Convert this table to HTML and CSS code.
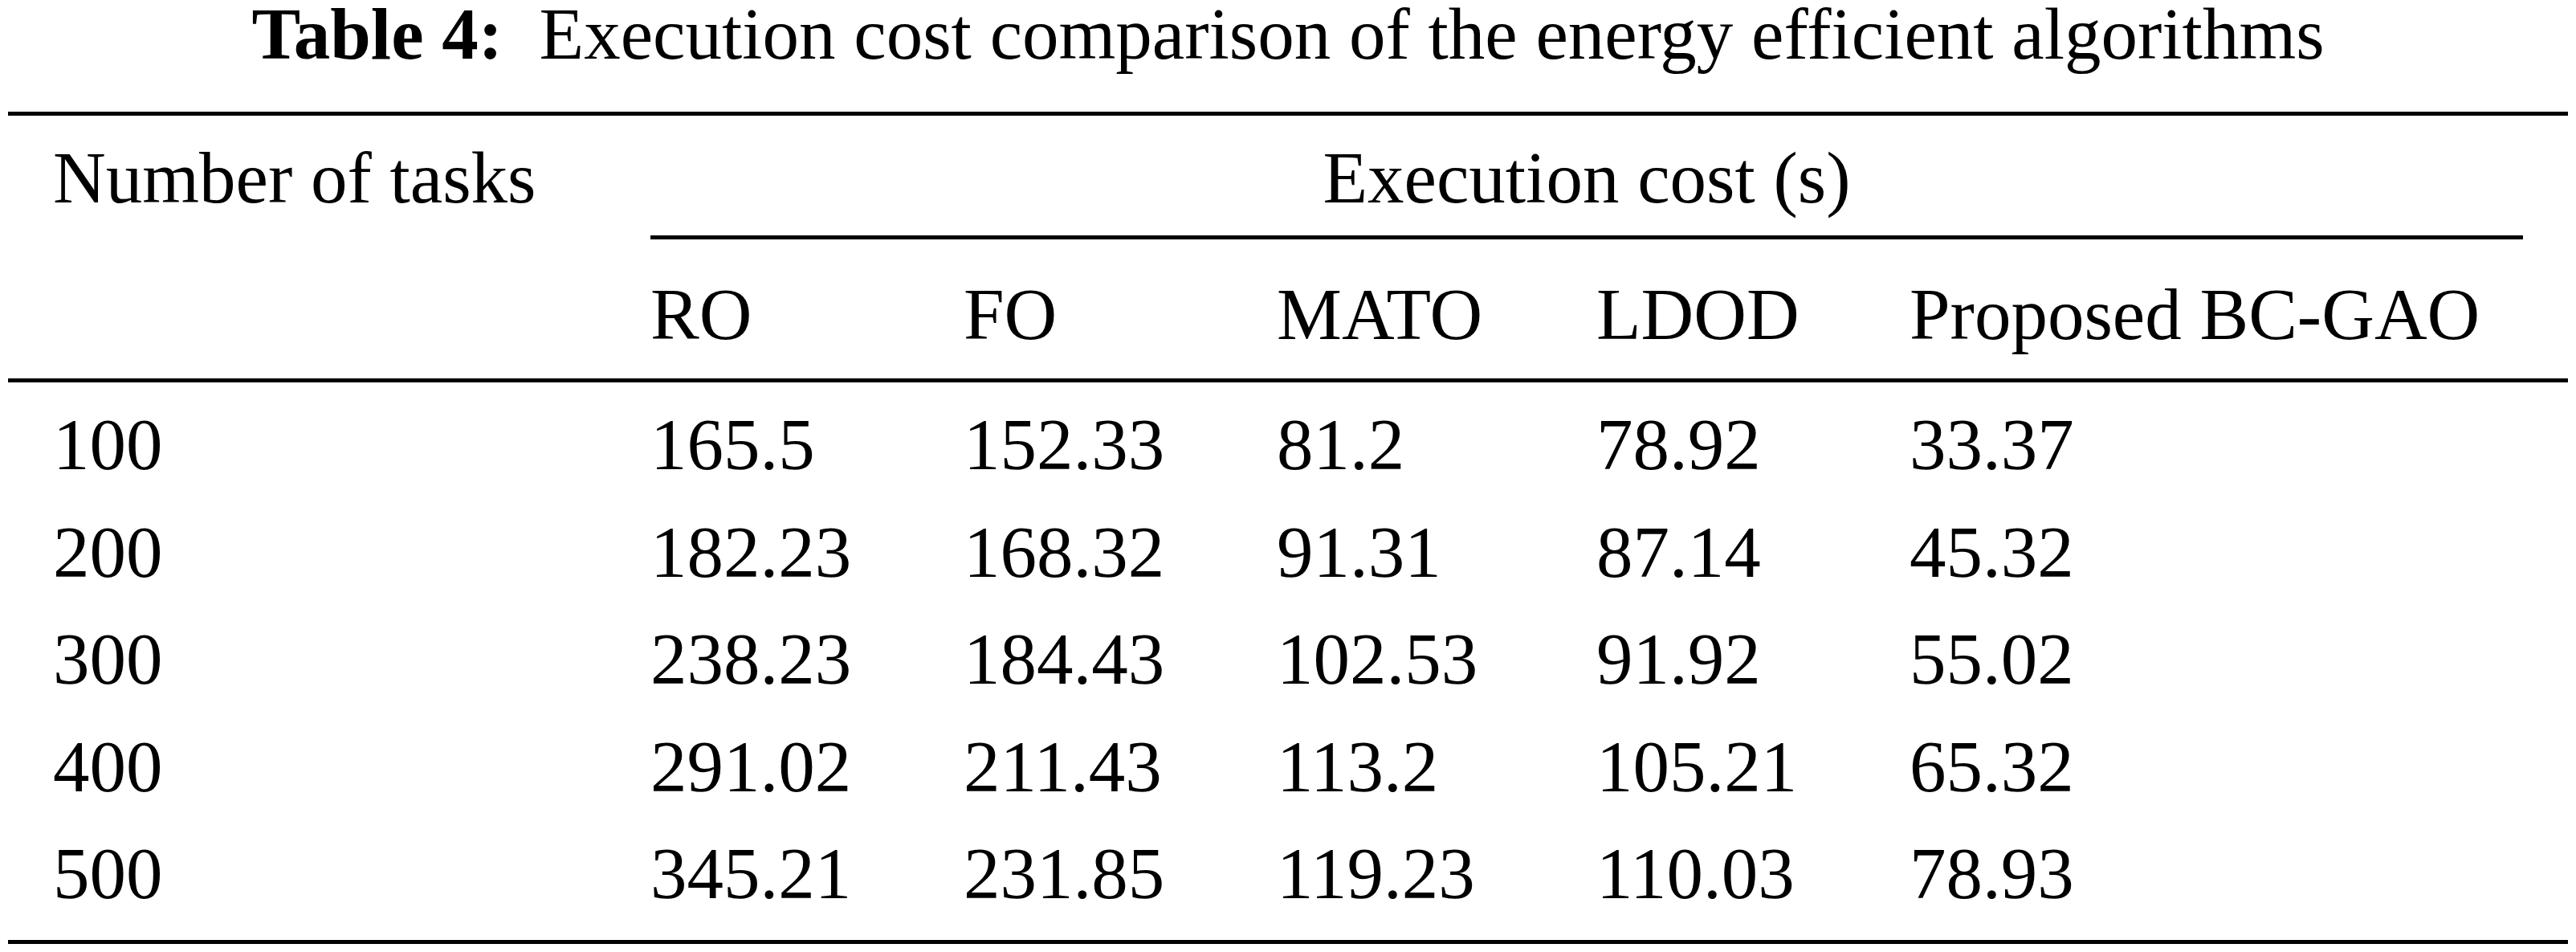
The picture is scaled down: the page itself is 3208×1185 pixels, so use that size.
FILE: index.html
```html
<!DOCTYPE html>
<html lang="en">
<head>
<meta charset="utf-8">
<title>Table 4</title>
<link rel="stylesheet" href="styles.css">
</head>
<body>
<div class="page">
  <div class="caption"><span class="caption-label">Table 4:</span>Execution cost comparison of the energy efficient algorithms</div>
  <div class="table">
    <div class="head">
      <div class="cell stub">Number of tasks</div>
      <div class="group">
        <div class="group-label">Execution cost (s)</div>
        <div class="cmid"></div>
      </div>
      <div class="cell sub">RO</div>
      <div class="cell sub">FO</div>
      <div class="cell sub">MATO</div>
      <div class="cell sub">LDOD</div>
      <div class="cell sub">Proposed BC-GAO</div>
    </div>
    <div class="body">
      <div class="cell">100</div><div class="cell">165.5</div><div class="cell">152.33</div><div class="cell">81.2</div><div class="cell">78.92</div><div class="cell">33.37</div>
      <div class="cell">200</div><div class="cell">182.23</div><div class="cell">168.32</div><div class="cell">91.31</div><div class="cell">87.14</div><div class="cell">45.32</div>
      <div class="cell">300</div><div class="cell">238.23</div><div class="cell">184.43</div><div class="cell">102.53</div><div class="cell">91.92</div><div class="cell">55.02</div>
      <div class="cell">400</div><div class="cell">291.02</div><div class="cell">211.43</div><div class="cell">113.2</div><div class="cell">105.21</div><div class="cell">65.32</div>
      <div class="cell">500</div><div class="cell">345.21</div><div class="cell">231.85</div><div class="cell">119.23</div><div class="cell">110.03</div><div class="cell">78.93</div>
    </div>
  </div>
</div>
</body>
</html>
```

FILE: styles.css
```css
html, body {
  margin: 0;
  padding: 0;
  background: #ffffff;
}

.page {
  width: 3188px;
  margin-left: 10px;
  font-family: "Liberation Serif", "Times New Roman", serif;
  font-size: 91px;
  color: #000000;
}

.caption {
  line-height: 86px;
  height: 86px;
  text-align: center;
  white-space: nowrap;
  margin-bottom: 53px;
}

.caption-label {
  font-weight: bold;
  margin-right: 0.5em;
}

.table {
  border-bottom: 5px solid #000;
}

.head,
.body {
  display: grid;
  grid-template-columns: 744px 390px 390px 398px 390px 876px;
}

.head {
  border-top: 5px solid #000;
  border-bottom: 5px solid #000;
}

.cell {
  padding: 0 0 0 56px;
  line-height: 133.5px;
  height: 133.5px;
  white-space: nowrap;
}

.stub {
  grid-column: 1;
  grid-row: 1 / 3;
  padding-top: 11px;
  align-self: start;
}

.group {
  grid-column: 2 / 7;
  grid-row: 1;
  padding: 11px 56px 0 56px;
}

.group-label {
  line-height: 133.5px;
  height: 133.5px;
  text-align: center;
  white-space: nowrap;
}

.cmid {
  margin-top: 4.5px;
  height: 5px;
  background: #000;
}

.sub {
  grid-row: 2;
  padding-top: 27px;
  padding-bottom: 12.5px;
}

.body {
  padding-top: 11px;
  padding-bottom: 15.5px;
}
```
